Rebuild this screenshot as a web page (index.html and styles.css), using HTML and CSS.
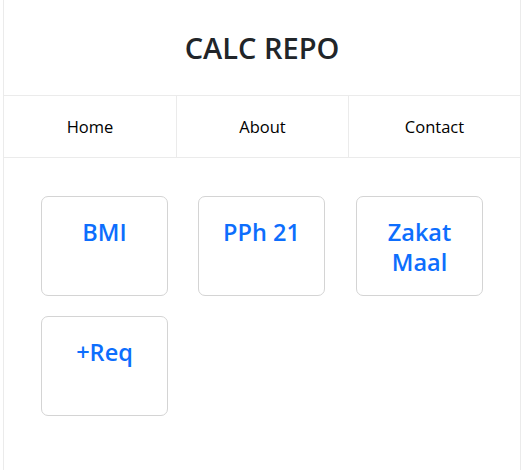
FILE: index.html
```html
<!DOCTYPE html>
<html lang="en">
<head>
<meta charset="utf-8">
<title>CALC REPO</title>
<link rel="stylesheet" href="styles.css">
</head>
<body>
<div class="page">
  <header class="header">
    <h1 class="title">CALC REPO</h1>
  </header>
  <nav class="nav">
    <a class="nav-item" href="#">Home</a>
    <a class="nav-item" href="#">About</a>
    <a class="nav-item" href="#">Contact</a>
  </nav>
  <main class="grid">
    <a class="card" href="#">BMI</a>
    <a class="card" href="#">PPh 21</a>
    <a class="card" href="#">Zakat Maal</a>
    <a class="card" href="#">+Req</a>
  </main>
</div>
</body>
</html>
```
FILE: styles.css
```css
html, body {
  margin: 0;
  padding: 0;
  background: #fff;
}
body {
  font-family: "Open Sans", "Noto Sans", sans-serif;
  color: #212529;
}
.page {
  margin-left: 3px;
  width: 516px;
  min-height: 470px;
  border-left: 1px solid #ebebeb;
  border-right: 1px solid #ebebeb;
}
.header {
  height: 95px;
  display: flex;
  align-items: center;
  justify-content: center;
}
.title {
  margin: 0;
  font-size: 29px;
  font-weight: 600;
  color: #212529;
}
.nav {
  display: grid;
  grid-template-columns: 1fr 1fr 1fr;
  border-top: 1px solid #ebebeb;
  border-bottom: 1px solid #ebebeb;
  height: 61px;
}
.nav-item {
  display: flex;
  align-items: center;
  justify-content: center;
  color: #000;
  text-decoration: none;
  font-size: 16.5px;
  border-left: 1px solid #ebebeb;
}
.nav-item:first-child {
  border-left: none;
}
.grid {
  display: flex;
  flex-wrap: wrap;
  column-gap: 30px;
  row-gap: 20px;
  padding: 38px 0 0 37px;
}
.card {
  box-sizing: border-box;
  width: 127px;
  height: 100px;
  border: 1px solid #d4d4d4;
  border-radius: 7px;
  padding: 20px 16px 0;
  text-align: center;
  color: #0d6efd;
  font-size: 23.5px;
  font-weight: 600;
  line-height: 30px;
  text-decoration: none;
}
.card:last-child {
  margin-left: 0;
}
.card:nth-child(3) {
  margin-left: 1px;
}
```
